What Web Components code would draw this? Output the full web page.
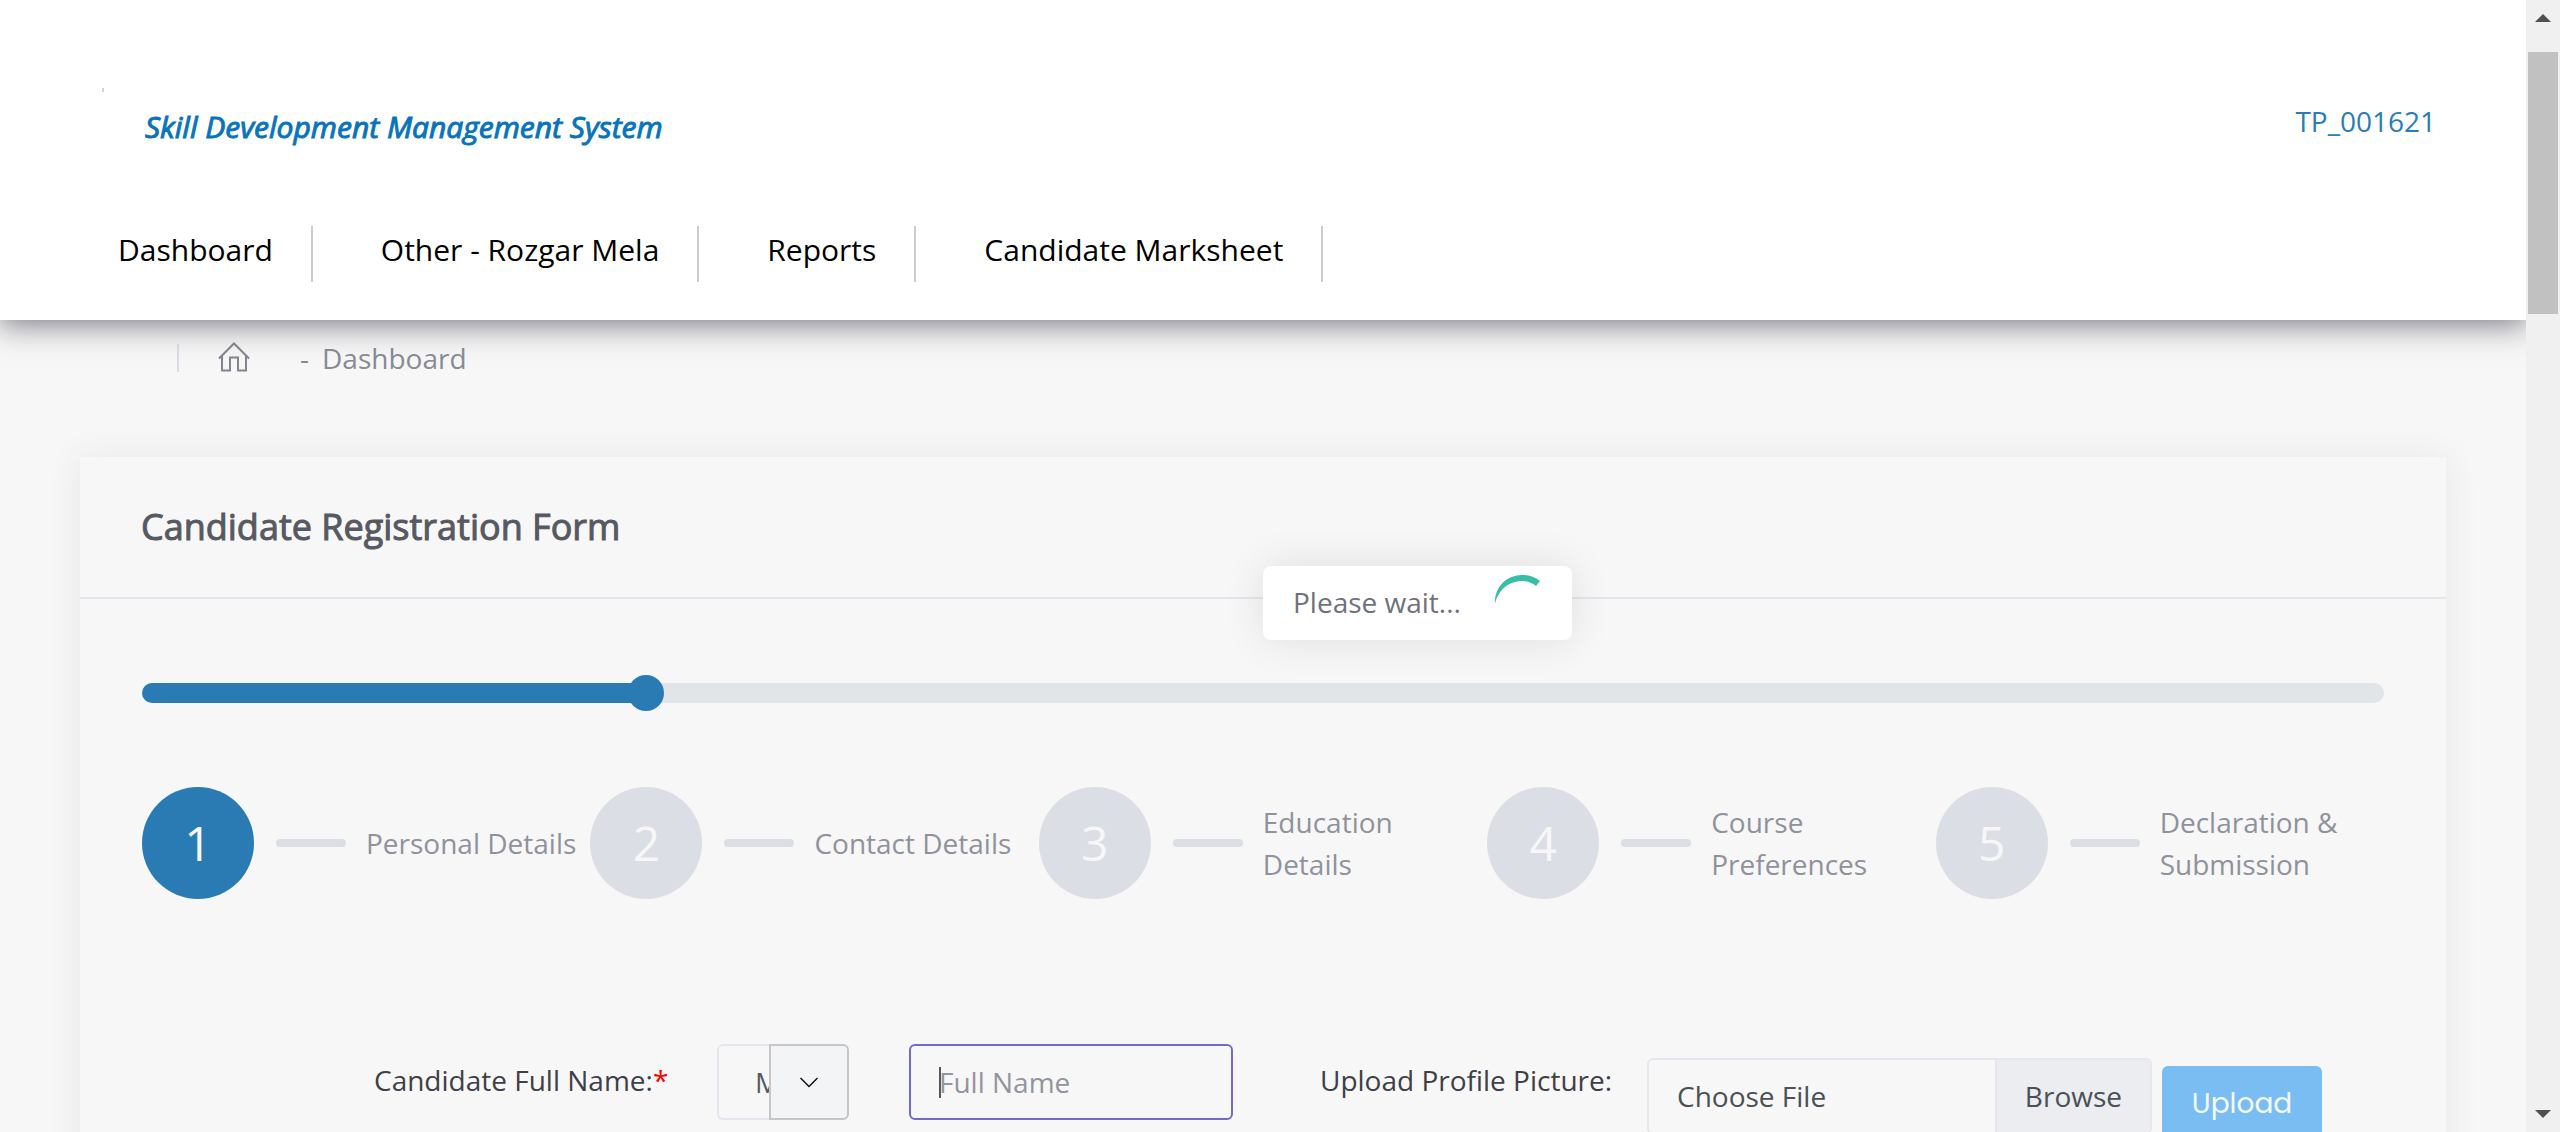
<!DOCTYPE html>
<html lang="en">
<head>
<meta charset="utf-8">
<meta name="viewport" content="width=device-width, initial-scale=1">
<title>Candidate Registration</title>
<style>
html,body{margin:0;height:100%;overflow:hidden}
body{background:#f7f7f7;font:28px/42px "Open Sans","Noto Sans",sans-serif;color:#3f4047}
</style>
</head>
<body>
<sdms-app></sdms-app>
<script>
function define(name, html, setup) {
  customElements.define(name, class extends HTMLElement {
    connectedCallback() {
      if (this.shadowRoot) return;
      const t = document.createElement('template');
      t.innerHTML = html;
      this.attachShadow({mode: 'open'}).append(t.content.cloneNode(true));
      if (setup) setup(this, this.shadowRoot);
    }
  });
}

define('nav-item', `
<style>
:host{display:flex;align-items:center;height:56px;padding:0 38px 0 68px;border-right:2px solid #ccc}
:host(:first-child){padding-left:0}
a{color:#000;text-decoration:none;font-size:30px;line-height:50px;padding-bottom:8px}
</style>
<a href="#"><slot></slot></a>`);

define('site-header', `
<style>
:host{display:flex;flex-direction:column;justify-content:space-between;box-sizing:border-box;height:320px;padding:88px 90px 38px 102px;background:#fff;position:relative;z-index:2;box-shadow:0 2px 30px 2px rgba(69,65,78,.72)}
.top{display:flex;justify-content:space-between;align-items:flex-start}
.brand{display:flex}
.mark{width:2px;height:4px;background:#d4d4d4}
.name{margin:18px 0 0 41px;font-size:30px;font-style:italic;color:#0974bb;-webkit-text-stroke:1px #0974bb}
.user{margin-top:12px;color:#2a7db7;text-decoration:none}
nav{display:flex;padding-left:16px}
</style>
<div class="top">
  <div class="brand"><span class="mark"></span><span class="name">Skill Development Management System</span></div>
  <a class="user" href="#">TP_001621</a>
</div>
<nav>
  <nav-item>Dashboard</nav-item><nav-item>Other - Rozgar Mela</nav-item><nav-item>Reports</nav-item><nav-item>Candidate Marksheet</nav-item>
</nav>`);

define('bread-crumb', `
<style>
:host{display:flex;align-items:center;height:42px;padding:17px 0 0 177px;color:#898b96}
.bar{width:2px;height:28px;background:#dcdee6;margin-right:39px}
a{display:flex;margin-right:50px}
.dash{margin-right:13px}
</style>
<span class="bar"></span>
<a href="#" aria-label="Home"><svg width="32" height="32" viewBox="0 0 32 32" fill="none" stroke="#83858f" stroke-width="2"><path d="M1 16.500 16 1.500 31 16.500"/><path d="M4 14V28.500H12V15.500H20V28.500H28V14"/></svg></a>
<span class="dash">-</span><span><slot></slot></span>`);

define('step-item', `
<style>
:host{flex:1 1 0;min-width:0;display:flex;align-items:center;color:#8f929b}
.num{flex:none;width:112px;height:112px;border-radius:50%;display:flex;align-items:center;justify-content:center;background:#dcdee6;color:#f7f7f7;font-size:48px}
:host([active]) .num{background:#2a7bb4}
.line{flex:none;width:70px;height:8px;border-radius:4px;background:#dcdee6;margin:0 20px 0 22px}
</style>
<span class="num"></span><span class="line"></span><span><slot></slot></span>`,
(host, root) => { root.querySelector('.num').textContent = host.getAttribute('n'); });

define('progress-track', `
<style>
:host{display:block;height:20px;border-radius:10px;background:#e1e5e8}
.fill{height:100%;width:22.5%;border-radius:10px 0 0 10px;background:#2a7bb4;display:flex;align-items:center;justify-content:flex-end}
.knob{flex:none;width:36px;height:36px;border-radius:50%;background:#2a7bb4;margin-right:-18px}
</style>
<div class="fill"><span class="knob"></span></div>`);

define('name-field', `
<style>
:host{display:flex;align-items:flex-start}
label{line-height:42px;margin-top:15px;width:343px}
b{font-weight:400;color:#f00}
*{box-sizing:border-box}
select,input,button{font:inherit;height:76px;margin:0;border-radius:6px;outline:none}
select{appearance:none;width:52px;padding:0 0 0 36px;border:2px solid #e6e7ee;border-right:0;border-radius:6px 0 0 6px;background:#f7f7f7;color:#575962;overflow:hidden}
button{width:80px;padding:0;border:2px solid #c6c6c6;border-radius:0 6px 6px 0;background:#f3f4f6;display:flex;align-items:center;justify-content:center}
input{width:324px;margin-left:60px;padding:0 28px;border:2px solid #716aca;background:#f7f7f7;color:#575962;caret-color:transparent}
input:focus:placeholder-shown{background:linear-gradient(#55575f,#55575f) 28px 21px/2px 31px no-repeat #f7f7f7}
input::placeholder{color:#93959e;opacity:1}
</style>
<label for="full">Candidate Full Name:<b>*</b></label>
<select aria-label="Title"><option>M</option></select>
<button type="button" aria-label="Choose title"><svg width="18" height="11" viewBox="0 0 18 11" fill="none" stroke="#111" stroke-width="1.500"><path d="M.5 1 9 9.500 17.500 1"/></svg></button>
<input id="full" type="text" placeholder="Full Name">`,
(host, root) => { root.getElementById('full').focus(); });

define('picture-field', `
<style>
:host{display:flex;align-items:flex-start}
*{box-sizing:border-box}
.cap{margin-top:15px;width:327px}
.file{display:flex;width:505px;height:76px;margin-top:14px;border:2px solid #e6e7ee;border-radius:6px;overflow:hidden;color:#495057;line-height:72px;position:relative}
.file input{position:absolute;width:1px;height:1px;opacity:0}
.choose{flex:1;padding-left:28px}
.browse{padding:0 28px;border-left:2px solid #e6e7ee;background:#ecedf1}
button{margin:22px 0 0 10px;width:160px;height:76px;border:0;border-radius:6px;background:#7abdf3;color:#f3f8fc;font:400 28px/42px Poppins,Lato,sans-serif}
</style>
<label class="cap" for="pic">Upload Profile Picture:</label>
<label class="file"><input id="pic" type="file"><span class="choose">Choose File</span><span class="browse">Browse</span></label>
<button type="button">Upload</button>`);

define('wait-toast', `
<style>
:host{position:absolute;left:1263px;top:566px;z-index:3;box-sizing:border-box;display:flex;justify-content:space-between;width:309px;height:74px;padding:15px 30px;border-radius:8px;background:#fff;color:#6f727d;box-shadow:0 0 40px rgba(0,0,0,.1);white-space:nowrap}
svg{flex:none;margin-top:-8px}
</style>
<span><slot></slot></span>
<svg width="48" height="48" viewBox="0 0 48 48"><path d="M1 31C0 14 13 2 28 2C35 2 41 4 46 8L42 13C38 10 33 8 28 8C15 8 4 17 1 31Z" fill="#36bea6"/></svg>`);

define('side-scroll', `
<style>
:host{flex:none;width:34px;background:#f0f0f0;display:flex;flex-direction:column;align-items:center;justify-content:space-between;box-sizing:border-box;padding:14px 0;position:relative;z-index:4}
.thumb{width:30px;height:262px;background:#c1c1c1;margin:30px 0 auto}
</style>
<svg width="16" height="8"><path d="M0 8 8 0 16 8Z" fill="#505050"/></svg>
<span class="thumb"></span>
<svg width="16" height="8"><path d="M0 0 8 8 16 0Z" fill="#505050"/></svg>`);

define('form-card', `
<style>
:host{display:block;margin:78px 80px 0;padding-bottom:300px;background:#f7f7f7;box-shadow:0 2px 30px 2px rgba(69,65,78,.08)}
header{display:flex;align-items:center;height:140px;padding:0 61px;border-bottom:2px solid #e4e4ec}
h2{margin:0;font-size:36px;line-height:54px;font-weight:400;color:#575962;-webkit-text-stroke:1px #575962}
.body{padding:84px 62px 0}
.steps{display:flex;margin:84px 0 145px}
.row{display:flex;gap:87px;padding-left:232px}
</style>
<header><h2>Candidate Registration Form</h2></header>
<div class="body">
  <progress-track></progress-track>
  <div class="steps">
    <step-item n="1" active>Personal Details</step-item>
    <step-item n="2">Contact Details</step-item>
    <step-item n="3">Education<br>Details</step-item>
    <step-item n="4">Course<br>Preferences</step-item>
    <step-item n="5">Declaration &amp;<br>Submission</step-item>
  </div>
  <div class="row"><name-field></name-field><picture-field></picture-field></div>
</div>`);

define('sdms-app', `
<style>
:host{display:flex;height:100vh;overflow:hidden;position:relative}
main{flex:1;min-width:0;overflow:hidden}
</style>
<main>
  <site-header></site-header>
  <bread-crumb>Dashboard</bread-crumb>
  <form-card></form-card>
</main>
<side-scroll></side-scroll>
<wait-toast>Please wait...</wait-toast>`);
</script>
</body>
</html>
